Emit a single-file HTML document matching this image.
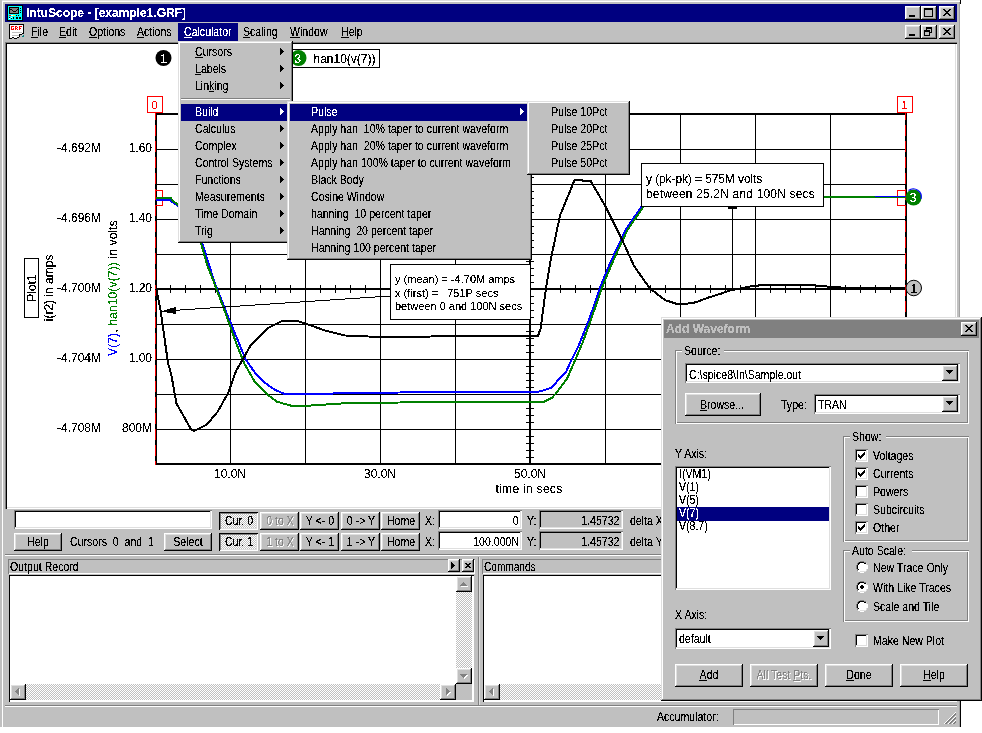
<!DOCTYPE html><html><head><meta charset="utf-8"><style>
*{margin:0;padding:0;box-sizing:border-box}
html,body{width:982px;height:733px;overflow:hidden;background:#fff}
body{position:relative;font-family:"Liberation Sans",sans-serif;font-size:12px;color:#000}
.a{position:absolute}
.t{position:absolute;white-space:pre;line-height:12px;font-size:12px;transform:scaleX(.88);transform-origin:0 0;filter:url(#th)}
.tc{transform-origin:50% 0}.tr{transform-origin:100% 0}
.n{transform:none}
.t u{text-decoration:underline;text-underline-offset:1px}
.btn{position:absolute;background:#c0c0c0;box-shadow:inset -1px -1px #000,inset 1px 1px #fff,inset -2px -2px #808080,inset 2px 2px #dfdfdf}
.sunk{position:absolute;background:#fff;box-shadow:inset 1px 1px #808080,inset -1px -1px #fff,inset -2px -2px #dfdfdf,inset 2px 2px #000}
.pop{position:absolute;background:#c0c0c0;box-shadow:inset -1px -1px #000,inset 1px 1px #dfdfdf,inset -2px -2px #808080,inset 2px 2px #fff}
.dither{background-color:#fff;background-image:linear-gradient(45deg,#c0c0c0 25%,transparent 25%,transparent 75%,#c0c0c0 75%),linear-gradient(45deg,#c0c0c0 25%,transparent 25%,transparent 75%,#c0c0c0 75%);background-size:2px 2px;background-position:0 0,1px 1px}
.dis{color:#808080;text-shadow:1px 1px #fff}
</style></head><body>
<svg width="0" height="0" style="position:absolute"><filter id="th" x="-10%" y="-10%" width="120%" height="120%" color-interpolation-filters="sRGB"><feComponentTransfer><feFuncA type="discrete" tableValues="0 0 1 1 1"/></feComponentTransfer></filter><filter id="th2" x="-10%" y="-10%" width="120%" height="120%" color-interpolation-filters="sRGB"><feComponentTransfer><feFuncA type="discrete" tableValues="0 1 1 1"/></feComponentTransfer></filter></svg>

<div class="a" style="left:0px;top:0px;width:960px;height:727px;background:#c0c0c0;box-shadow:inset 2px 0 #c0c0c0,inset 0 1px #dfdfdf,inset 3px 2px #fff,inset -1px 0 #a0a0a0"></div>
<div class="a" style="left:960px;top:0px;width:1px;height:4px;background:#000"></div>
<div class="a" style="left:5px;top:4px;width:952px;height:18px;background:#000080"></div>
<svg class="a" style="left:7px;top:5px" width="16" height="16" shape-rendering="crispEdges"><rect x="0" y="0" width="1" height="1" fill="#000"/><rect x="1" y="0" width="1" height="1" fill="#000"/><rect x="2" y="0" width="1" height="1" fill="#000"/><rect x="3" y="0" width="1" height="1" fill="#000"/><rect x="4" y="0" width="1" height="1" fill="#000"/><rect x="5" y="0" width="1" height="1" fill="#000"/><rect x="6" y="0" width="1" height="1" fill="#000"/><rect x="7" y="0" width="1" height="1" fill="#000"/><rect x="8" y="0" width="1" height="1" fill="#000"/><rect x="9" y="0" width="1" height="1" fill="#000"/><rect x="10" y="0" width="1" height="1" fill="#000"/><rect x="11" y="0" width="1" height="1" fill="#000"/><rect x="12" y="0" width="1" height="1" fill="#000"/><rect x="13" y="0" width="1" height="1" fill="#000"/><rect x="14" y="0" width="1" height="1" fill="#000"/><rect x="15" y="0" width="1" height="1" fill="#000"/><rect x="0" y="1" width="1" height="1" fill="#000"/><rect x="1" y="1" width="1" height="1" fill="#0ff"/><rect x="2" y="1" width="1" height="1" fill="#0ff"/><rect x="3" y="1" width="1" height="1" fill="#0ff"/><rect x="4" y="1" width="1" height="1" fill="#0ff"/><rect x="5" y="1" width="1" height="1" fill="#0ff"/><rect x="6" y="1" width="1" height="1" fill="#0ff"/><rect x="7" y="1" width="1" height="1" fill="#0ff"/><rect x="8" y="1" width="1" height="1" fill="#0ff"/><rect x="9" y="1" width="1" height="1" fill="#0ff"/><rect x="10" y="1" width="1" height="1" fill="#0ff"/><rect x="11" y="1" width="1" height="1" fill="#0ff"/><rect x="12" y="1" width="1" height="1" fill="#0ff"/><rect x="13" y="1" width="1" height="1" fill="#0ff"/><rect x="14" y="1" width="1" height="1" fill="#0ff"/><rect x="15" y="1" width="1" height="1" fill="#000"/><rect x="0" y="2" width="1" height="1" fill="#000"/><rect x="1" y="2" width="1" height="1" fill="#0ff"/><rect x="2" y="2" width="1" height="1" fill="#000"/><rect x="3" y="2" width="1" height="1" fill="#000"/><rect x="4" y="2" width="1" height="1" fill="#000"/><rect x="5" y="2" width="1" height="1" fill="#000"/><rect x="6" y="2" width="1" height="1" fill="#000"/><rect x="7" y="2" width="1" height="1" fill="#000"/><rect x="8" y="2" width="1" height="1" fill="#000"/><rect x="9" y="2" width="1" height="1" fill="#000"/><rect x="10" y="2" width="1" height="1" fill="#000"/><rect x="11" y="2" width="1" height="1" fill="#000"/><rect x="12" y="2" width="1" height="1" fill="#0ff"/><rect x="13" y="2" width="1" height="1" fill="#0ff"/><rect x="14" y="2" width="1" height="1" fill="#0ff"/><rect x="15" y="2" width="1" height="1" fill="#000"/><rect x="0" y="3" width="1" height="1" fill="#000"/><rect x="1" y="3" width="1" height="1" fill="#0ff"/><rect x="2" y="3" width="1" height="1" fill="#000"/><rect x="3" y="3" width="1" height="1" fill="#808080"/><rect x="4" y="3" width="1" height="1" fill="#808080"/><rect x="5" y="3" width="1" height="1" fill="#808080"/><rect x="6" y="3" width="1" height="1" fill="#808080"/><rect x="7" y="3" width="1" height="1" fill="#808080"/><rect x="8" y="3" width="1" height="1" fill="#808080"/><rect x="9" y="3" width="1" height="1" fill="#808080"/><rect x="10" y="3" width="1" height="1" fill="#808080"/><rect x="11" y="3" width="1" height="1" fill="#000"/><rect x="12" y="3" width="1" height="1" fill="#0ff"/><rect x="13" y="3" width="1" height="1" fill="#000"/><rect x="14" y="3" width="1" height="1" fill="#0ff"/><rect x="15" y="3" width="1" height="1" fill="#000"/><rect x="0" y="4" width="1" height="1" fill="#000"/><rect x="1" y="4" width="1" height="1" fill="#0ff"/><rect x="2" y="4" width="1" height="1" fill="#000"/><rect x="3" y="4" width="1" height="1" fill="#000"/><rect x="4" y="4" width="1" height="1" fill="#000"/><rect x="5" y="4" width="1" height="1" fill="#808080"/><rect x="6" y="4" width="1" height="1" fill="#808080"/><rect x="7" y="4" width="1" height="1" fill="#808080"/><rect x="8" y="4" width="1" height="1" fill="#808080"/><rect x="9" y="4" width="1" height="1" fill="#808080"/><rect x="10" y="4" width="1" height="1" fill="#000"/><rect x="11" y="4" width="1" height="1" fill="#000"/><rect x="12" y="4" width="1" height="1" fill="#0ff"/><rect x="13" y="4" width="1" height="1" fill="#0ff"/><rect x="14" y="4" width="1" height="1" fill="#0ff"/><rect x="15" y="4" width="1" height="1" fill="#000"/><rect x="0" y="5" width="1" height="1" fill="#000"/><rect x="1" y="5" width="1" height="1" fill="#0ff"/><rect x="2" y="5" width="1" height="1" fill="#000"/><rect x="3" y="5" width="1" height="1" fill="#808080"/><rect x="4" y="5" width="1" height="1" fill="#808080"/><rect x="5" y="5" width="1" height="1" fill="#000"/><rect x="6" y="5" width="1" height="1" fill="#808080"/><rect x="7" y="5" width="1" height="1" fill="#808080"/><rect x="8" y="5" width="1" height="1" fill="#808080"/><rect x="9" y="5" width="1" height="1" fill="#000"/><rect x="10" y="5" width="1" height="1" fill="#808080"/><rect x="11" y="5" width="1" height="1" fill="#000"/><rect x="12" y="5" width="1" height="1" fill="#0ff"/><rect x="13" y="5" width="1" height="1" fill="#000"/><rect x="14" y="5" width="1" height="1" fill="#0ff"/><rect x="15" y="5" width="1" height="1" fill="#000"/><rect x="0" y="6" width="1" height="1" fill="#000"/><rect x="1" y="6" width="1" height="1" fill="#0ff"/><rect x="2" y="6" width="1" height="1" fill="#000"/><rect x="3" y="6" width="1" height="1" fill="#808080"/><rect x="4" y="6" width="1" height="1" fill="#808080"/><rect x="5" y="6" width="1" height="1" fill="#808080"/><rect x="6" y="6" width="1" height="1" fill="#000"/><rect x="7" y="6" width="1" height="1" fill="#000"/><rect x="8" y="6" width="1" height="1" fill="#000"/><rect x="9" y="6" width="1" height="1" fill="#808080"/><rect x="10" y="6" width="1" height="1" fill="#808080"/><rect x="11" y="6" width="1" height="1" fill="#000"/><rect x="12" y="6" width="1" height="1" fill="#0ff"/><rect x="13" y="6" width="1" height="1" fill="#0ff"/><rect x="14" y="6" width="1" height="1" fill="#0ff"/><rect x="15" y="6" width="1" height="1" fill="#000"/><rect x="0" y="7" width="1" height="1" fill="#000"/><rect x="1" y="7" width="1" height="1" fill="#0ff"/><rect x="2" y="7" width="1" height="1" fill="#000"/><rect x="3" y="7" width="1" height="1" fill="#808080"/><rect x="4" y="7" width="1" height="1" fill="#808080"/><rect x="5" y="7" width="1" height="1" fill="#808080"/><rect x="6" y="7" width="1" height="1" fill="#808080"/><rect x="7" y="7" width="1" height="1" fill="#808080"/><rect x="8" y="7" width="1" height="1" fill="#808080"/><rect x="9" y="7" width="1" height="1" fill="#808080"/><rect x="10" y="7" width="1" height="1" fill="#808080"/><rect x="11" y="7" width="1" height="1" fill="#000"/><rect x="12" y="7" width="1" height="1" fill="#0ff"/><rect x="13" y="7" width="1" height="1" fill="#000"/><rect x="14" y="7" width="1" height="1" fill="#0ff"/><rect x="15" y="7" width="1" height="1" fill="#000"/><rect x="0" y="8" width="1" height="1" fill="#000"/><rect x="1" y="8" width="1" height="1" fill="#0ff"/><rect x="2" y="8" width="1" height="1" fill="#000"/><rect x="3" y="8" width="1" height="1" fill="#000"/><rect x="4" y="8" width="1" height="1" fill="#000"/><rect x="5" y="8" width="1" height="1" fill="#000"/><rect x="6" y="8" width="1" height="1" fill="#000"/><rect x="7" y="8" width="1" height="1" fill="#000"/><rect x="8" y="8" width="1" height="1" fill="#000"/><rect x="9" y="8" width="1" height="1" fill="#000"/><rect x="10" y="8" width="1" height="1" fill="#000"/><rect x="11" y="8" width="1" height="1" fill="#000"/><rect x="12" y="8" width="1" height="1" fill="#0ff"/><rect x="13" y="8" width="1" height="1" fill="#0ff"/><rect x="14" y="8" width="1" height="1" fill="#0ff"/><rect x="15" y="8" width="1" height="1" fill="#000"/><rect x="0" y="9" width="1" height="1" fill="#000"/><rect x="1" y="9" width="1" height="1" fill="#0ff"/><rect x="2" y="9" width="1" height="1" fill="#0ff"/><rect x="3" y="9" width="1" height="1" fill="#0ff"/><rect x="4" y="9" width="1" height="1" fill="#0ff"/><rect x="5" y="9" width="1" height="1" fill="#0ff"/><rect x="6" y="9" width="1" height="1" fill="#0ff"/><rect x="7" y="9" width="1" height="1" fill="#0ff"/><rect x="8" y="9" width="1" height="1" fill="#0ff"/><rect x="9" y="9" width="1" height="1" fill="#0ff"/><rect x="10" y="9" width="1" height="1" fill="#0ff"/><rect x="11" y="9" width="1" height="1" fill="#0ff"/><rect x="12" y="9" width="1" height="1" fill="#0ff"/><rect x="13" y="9" width="1" height="1" fill="#0ff"/><rect x="14" y="9" width="1" height="1" fill="#0ff"/><rect x="15" y="9" width="1" height="1" fill="#000"/><rect x="0" y="10" width="1" height="1" fill="#000"/><rect x="1" y="10" width="1" height="1" fill="#0ff"/><rect x="2" y="10" width="1" height="1" fill="#f00"/><rect x="3" y="10" width="1" height="1" fill="#f00"/><rect x="4" y="10" width="1" height="1" fill="#fff"/><rect x="5" y="10" width="1" height="1" fill="#fff"/><rect x="6" y="10" width="1" height="1" fill="#ff0"/><rect x="7" y="10" width="1" height="1" fill="#ff0"/><rect x="8" y="10" width="1" height="1" fill="#0ff"/><rect x="9" y="10" width="1" height="1" fill="#000"/><rect x="10" y="10" width="1" height="1" fill="#0ff"/><rect x="11" y="10" width="1" height="1" fill="#000"/><rect x="12" y="10" width="1" height="1" fill="#0ff"/><rect x="13" y="10" width="1" height="1" fill="#0ff"/><rect x="14" y="10" width="1" height="1" fill="#0ff"/><rect x="15" y="10" width="1" height="1" fill="#000"/><rect x="0" y="11" width="1" height="1" fill="#000"/><rect x="1" y="11" width="1" height="1" fill="#0ff"/><rect x="2" y="11" width="1" height="1" fill="#0ff"/><rect x="3" y="11" width="1" height="1" fill="#0ff"/><rect x="4" y="11" width="1" height="1" fill="#0ff"/><rect x="5" y="11" width="1" height="1" fill="#0ff"/><rect x="6" y="11" width="1" height="1" fill="#0ff"/><rect x="7" y="11" width="1" height="1" fill="#0ff"/><rect x="8" y="11" width="1" height="1" fill="#0ff"/><rect x="9" y="11" width="1" height="1" fill="#0ff"/><rect x="10" y="11" width="1" height="1" fill="#0ff"/><rect x="11" y="11" width="1" height="1" fill="#0ff"/><rect x="12" y="11" width="1" height="1" fill="#0ff"/><rect x="13" y="11" width="1" height="1" fill="#0ff"/><rect x="14" y="11" width="1" height="1" fill="#0ff"/><rect x="15" y="11" width="1" height="1" fill="#000"/><rect x="0" y="12" width="1" height="1" fill="#000"/><rect x="1" y="12" width="1" height="1" fill="#0ff"/><rect x="2" y="12" width="1" height="1" fill="#000"/><rect x="3" y="12" width="1" height="1" fill="#0ff"/><rect x="4" y="12" width="1" height="1" fill="#fff"/><rect x="5" y="12" width="1" height="1" fill="#0ff"/><rect x="6" y="12" width="1" height="1" fill="#000"/><rect x="7" y="12" width="1" height="1" fill="#0ff"/><rect x="8" y="12" width="1" height="1" fill="#0ff"/><rect x="9" y="12" width="1" height="1" fill="#000"/><rect x="10" y="12" width="1" height="1" fill="#000"/><rect x="11" y="12" width="1" height="1" fill="#0ff"/><rect x="12" y="12" width="1" height="1" fill="#000"/><rect x="13" y="12" width="1" height="1" fill="#000"/><rect x="14" y="12" width="1" height="1" fill="#0ff"/><rect x="15" y="12" width="1" height="1" fill="#000"/><rect x="0" y="13" width="1" height="1" fill="#000"/><rect x="1" y="13" width="1" height="1" fill="#0ff"/><rect x="2" y="13" width="1" height="1" fill="#fff"/><rect x="3" y="13" width="1" height="1" fill="#0ff"/><rect x="4" y="13" width="1" height="1" fill="#000"/><rect x="5" y="13" width="1" height="1" fill="#0ff"/><rect x="6" y="13" width="1" height="1" fill="#000"/><rect x="7" y="13" width="1" height="1" fill="#0ff"/><rect x="8" y="13" width="1" height="1" fill="#0ff"/><rect x="9" y="13" width="1" height="1" fill="#000"/><rect x="10" y="13" width="1" height="1" fill="#000"/><rect x="11" y="13" width="1" height="1" fill="#0ff"/><rect x="12" y="13" width="1" height="1" fill="#000"/><rect x="13" y="13" width="1" height="1" fill="#000"/><rect x="14" y="13" width="1" height="1" fill="#0ff"/><rect x="15" y="13" width="1" height="1" fill="#000"/><rect x="0" y="14" width="1" height="1" fill="#000"/><rect x="1" y="14" width="1" height="1" fill="#0ff"/><rect x="2" y="14" width="1" height="1" fill="#0ff"/><rect x="3" y="14" width="1" height="1" fill="#0ff"/><rect x="4" y="14" width="1" height="1" fill="#0ff"/><rect x="5" y="14" width="1" height="1" fill="#0ff"/><rect x="6" y="14" width="1" height="1" fill="#0ff"/><rect x="7" y="14" width="1" height="1" fill="#0ff"/><rect x="8" y="14" width="1" height="1" fill="#0ff"/><rect x="9" y="14" width="1" height="1" fill="#0ff"/><rect x="10" y="14" width="1" height="1" fill="#0ff"/><rect x="11" y="14" width="1" height="1" fill="#0ff"/><rect x="12" y="14" width="1" height="1" fill="#0ff"/><rect x="13" y="14" width="1" height="1" fill="#0ff"/><rect x="14" y="14" width="1" height="1" fill="#0ff"/><rect x="15" y="14" width="1" height="1" fill="#000"/><rect x="0" y="15" width="1" height="1" fill="#000"/><rect x="1" y="15" width="1" height="1" fill="#000"/><rect x="2" y="15" width="1" height="1" fill="#000"/><rect x="3" y="15" width="1" height="1" fill="#000"/><rect x="4" y="15" width="1" height="1" fill="#000"/><rect x="5" y="15" width="1" height="1" fill="#000"/><rect x="6" y="15" width="1" height="1" fill="#000"/><rect x="7" y="15" width="1" height="1" fill="#000"/><rect x="8" y="15" width="1" height="1" fill="#000"/><rect x="9" y="15" width="1" height="1" fill="#000"/><rect x="10" y="15" width="1" height="1" fill="#000"/><rect x="11" y="15" width="1" height="1" fill="#000"/><rect x="12" y="15" width="1" height="1" fill="#000"/><rect x="13" y="15" width="1" height="1" fill="#000"/><rect x="14" y="15" width="1" height="1" fill="#000"/><rect x="15" y="15" width="1" height="1" fill="#000"/></svg>
<div class="t" style="left:26px;top:7px;color:#fff;font-weight:bold;transform:none">IntuScope - [example1.GRF]</div>
<div class="btn" style="left:905px;top:6px;width:16px;height:14px;"></div>
<div class="btn" style="left:921px;top:6px;width:16px;height:14px;"></div>
<div class="btn" style="left:939px;top:6px;width:16px;height:14px;"></div>
<div class="a" style="left:909px;top:15px;width:6px;height:2px;background:#000"></div>
<div class="a" style="left:924px;top:8px;width:9px;height:9px;border:1px solid #000;border-top-width:2px"></div>
<svg class="a" style="left:943px;top:9px" width="8" height="7" shape-rendering="crispEdges"><path d="M0 0h2v1h1v1h2v-1h1v-1h2v1h-1v1h-1v1h-1v1h1v1h1v1h1v1h-2v-1h-1v-1h-2v1h-1v1h-2v-1h1v-1h1v-1h1v-1h-1v-1h-1v-1h-1z" fill="#000"/></svg>
<svg class="a" style="left:9px;top:24px" width="16" height="16" shape-rendering="crispEdges"><rect x="0" y="0" width="1" height="1" fill="#000"/><rect x="1" y="0" width="1" height="1" fill="#000"/><rect x="2" y="0" width="1" height="1" fill="#000"/><rect x="3" y="0" width="1" height="1" fill="#000"/><rect x="4" y="0" width="1" height="1" fill="#000"/><rect x="5" y="0" width="1" height="1" fill="#000"/><rect x="6" y="0" width="1" height="1" fill="#000"/><rect x="7" y="0" width="1" height="1" fill="#000"/><rect x="8" y="0" width="1" height="1" fill="#000"/><rect x="9" y="0" width="1" height="1" fill="#000"/><rect x="10" y="0" width="1" height="1" fill="#000"/><rect x="11" y="0" width="1" height="1" fill="#000"/><rect x="12" y="0" width="1" height="1" fill="#000"/><rect x="13" y="0" width="1" height="1" fill="#000"/><rect x="14" y="0" width="1" height="1" fill="#000"/><rect x="0" y="1" width="1" height="1" fill="#000"/><rect x="0" y="2" width="1" height="1" fill="#000"/><rect x="0" y="3" width="1" height="1" fill="#000"/><rect x="0" y="4" width="1" height="1" fill="#000"/><rect x="0" y="5" width="1" height="1" fill="#000"/><rect x="0" y="6" width="1" height="1" fill="#000"/><rect x="0" y="7" width="1" height="1" fill="#000"/><rect x="0" y="8" width="1" height="1" fill="#000"/><rect x="0" y="9" width="1" height="1" fill="#000"/><rect x="0" y="10" width="1" height="1" fill="#000"/><rect x="0" y="11" width="1" height="1" fill="#000"/><rect x="0" y="12" width="1" height="1" fill="#000"/><rect x="0" y="13" width="1" height="1" fill="#000"/><rect x="0" y="14" width="1" height="1" fill="#000"/><rect x="14" y="1" width="1" height="1" fill="#000"/><rect x="14" y="2" width="1" height="1" fill="#000"/><rect x="14" y="3" width="1" height="1" fill="#000"/><rect x="14" y="4" width="1" height="1" fill="#000"/><rect x="14" y="5" width="1" height="1" fill="#000"/><rect x="14" y="6" width="1" height="1" fill="#000"/><rect x="14" y="7" width="1" height="1" fill="#000"/><rect x="14" y="8" width="1" height="1" fill="#000"/><rect x="14" y="9" width="1" height="1" fill="#000"/><rect x="1" y="1" width="1" height="1" fill="#fff"/><rect x="2" y="1" width="1" height="1" fill="#fff"/><rect x="3" y="1" width="1" height="1" fill="#fff"/><rect x="4" y="1" width="1" height="1" fill="#fff"/><rect x="5" y="1" width="1" height="1" fill="#fff"/><rect x="6" y="1" width="1" height="1" fill="#fff"/><rect x="7" y="1" width="1" height="1" fill="#fff"/><rect x="8" y="1" width="1" height="1" fill="#fff"/><rect x="9" y="1" width="1" height="1" fill="#fff"/><rect x="10" y="1" width="1" height="1" fill="#fff"/><rect x="11" y="1" width="1" height="1" fill="#fff"/><rect x="12" y="1" width="1" height="1" fill="#fff"/><rect x="13" y="1" width="1" height="1" fill="#fff"/><rect x="1" y="2" width="1" height="1" fill="#fff"/><rect x="2" y="2" width="1" height="1" fill="#f00"/><rect x="3" y="2" width="1" height="1" fill="#f00"/><rect x="4" y="2" width="1" height="1" fill="#f00"/><rect x="5" y="2" width="1" height="1" fill="#fff"/><rect x="6" y="2" width="1" height="1" fill="#f00"/><rect x="7" y="2" width="1" height="1" fill="#f00"/><rect x="8" y="2" width="1" height="1" fill="#fff"/><rect x="9" y="2" width="1" height="1" fill="#fff"/><rect x="10" y="2" width="1" height="1" fill="#f00"/><rect x="11" y="2" width="1" height="1" fill="#f00"/><rect x="12" y="2" width="1" height="1" fill="#f00"/><rect x="13" y="2" width="1" height="1" fill="#fff"/><rect x="1" y="3" width="1" height="1" fill="#fff"/><rect x="2" y="3" width="1" height="1" fill="#f00"/><rect x="3" y="3" width="1" height="1" fill="#fff"/><rect x="4" y="3" width="1" height="1" fill="#fff"/><rect x="5" y="3" width="1" height="1" fill="#fff"/><rect x="6" y="3" width="1" height="1" fill="#f00"/><rect x="7" y="3" width="1" height="1" fill="#fff"/><rect x="8" y="3" width="1" height="1" fill="#f00"/><rect x="9" y="3" width="1" height="1" fill="#fff"/><rect x="10" y="3" width="1" height="1" fill="#f00"/><rect x="11" y="3" width="1" height="1" fill="#fff"/><rect x="12" y="3" width="1" height="1" fill="#fff"/><rect x="13" y="3" width="1" height="1" fill="#fff"/><rect x="1" y="4" width="1" height="1" fill="#fff"/><rect x="2" y="4" width="1" height="1" fill="#f00"/><rect x="3" y="4" width="1" height="1" fill="#fff"/><rect x="4" y="4" width="1" height="1" fill="#f00"/><rect x="5" y="4" width="1" height="1" fill="#fff"/><rect x="6" y="4" width="1" height="1" fill="#f00"/><rect x="7" y="4" width="1" height="1" fill="#f00"/><rect x="8" y="4" width="1" height="1" fill="#fff"/><rect x="9" y="4" width="1" height="1" fill="#fff"/><rect x="10" y="4" width="1" height="1" fill="#f00"/><rect x="11" y="4" width="1" height="1" fill="#f00"/><rect x="12" y="4" width="1" height="1" fill="#fff"/><rect x="13" y="4" width="1" height="1" fill="#fff"/><rect x="1" y="5" width="1" height="1" fill="#fff"/><rect x="2" y="5" width="1" height="1" fill="#f00"/><rect x="3" y="5" width="1" height="1" fill="#f00"/><rect x="4" y="5" width="1" height="1" fill="#f00"/><rect x="5" y="5" width="1" height="1" fill="#fff"/><rect x="6" y="5" width="1" height="1" fill="#f00"/><rect x="7" y="5" width="1" height="1" fill="#fff"/><rect x="8" y="5" width="1" height="1" fill="#f00"/><rect x="9" y="5" width="1" height="1" fill="#fff"/><rect x="10" y="5" width="1" height="1" fill="#f00"/><rect x="11" y="5" width="1" height="1" fill="#fff"/><rect x="12" y="5" width="1" height="1" fill="#fff"/><rect x="13" y="5" width="1" height="1" fill="#fff"/><rect x="1" y="6" width="1" height="1" fill="#fff"/><rect x="2" y="6" width="1" height="1" fill="#fff"/><rect x="3" y="6" width="1" height="1" fill="#fff"/><rect x="4" y="6" width="1" height="1" fill="#fff"/><rect x="5" y="6" width="1" height="1" fill="#fff"/><rect x="6" y="6" width="1" height="1" fill="#fff"/><rect x="7" y="6" width="1" height="1" fill="#fff"/><rect x="8" y="6" width="1" height="1" fill="#fff"/><rect x="9" y="6" width="1" height="1" fill="#fff"/><rect x="10" y="6" width="1" height="1" fill="#fff"/><rect x="11" y="6" width="1" height="1" fill="#fff"/><rect x="12" y="6" width="1" height="1" fill="#fff"/><rect x="13" y="6" width="1" height="1" fill="#fff"/><rect x="1" y="7" width="1" height="1" fill="#fff"/><rect x="2" y="7" width="1" height="1" fill="#fff"/><rect x="3" y="7" width="1" height="1" fill="#fff"/><rect x="4" y="7" width="1" height="1" fill="#fff"/><rect x="5" y="7" width="1" height="1" fill="#fff"/><rect x="6" y="7" width="1" height="1" fill="#fff"/><rect x="7" y="7" width="1" height="1" fill="#fff"/><rect x="8" y="7" width="1" height="1" fill="#fff"/><rect x="9" y="7" width="1" height="1" fill="#fff"/><rect x="10" y="7" width="1" height="1" fill="#fff"/><rect x="11" y="7" width="1" height="1" fill="#fff"/><rect x="12" y="7" width="1" height="1" fill="#fff"/><rect x="13" y="7" width="1" height="1" fill="#fff"/><rect x="1" y="8" width="1" height="1" fill="#fff"/><rect x="2" y="8" width="1" height="1" fill="#fff"/><rect x="3" y="8" width="1" height="1" fill="#c0c0c0"/><rect x="4" y="8" width="1" height="1" fill="#c0c0c0"/><rect x="5" y="8" width="1" height="1" fill="#c0c0c0"/><rect x="6" y="8" width="1" height="1" fill="#c0c0c0"/><rect x="7" y="8" width="1" height="1" fill="#c0c0c0"/><rect x="8" y="8" width="1" height="1" fill="#c0c0c0"/><rect x="9" y="8" width="1" height="1" fill="#c0c0c0"/><rect x="10" y="8" width="1" height="1" fill="#c0c0c0"/><rect x="11" y="8" width="1" height="1" fill="#c0c0c0"/><rect x="12" y="8" width="1" height="1" fill="#c0c0c0"/><rect x="13" y="8" width="1" height="1" fill="#fff"/><rect x="1" y="9" width="1" height="1" fill="#fff"/><rect x="2" y="9" width="1" height="1" fill="#fff"/><rect x="3" y="9" width="1" height="1" fill="#fff"/><rect x="4" y="9" width="1" height="1" fill="#fff"/><rect x="5" y="9" width="1" height="1" fill="#fff"/><rect x="6" y="9" width="1" height="1" fill="#fff"/><rect x="7" y="9" width="1" height="1" fill="#fff"/><rect x="8" y="9" width="1" height="1" fill="#fff"/><rect x="9" y="9" width="1" height="1" fill="#fff"/><rect x="10" y="9" width="1" height="1" fill="#fff"/><rect x="11" y="9" width="1" height="1" fill="#fff"/><rect x="12" y="9" width="1" height="1" fill="#fff"/><rect x="13" y="9" width="1" height="1" fill="#000"/><rect x="1" y="10" width="1" height="1" fill="#fff"/><rect x="2" y="10" width="1" height="1" fill="#fff"/><rect x="3" y="10" width="1" height="1" fill="#fff"/><rect x="4" y="10" width="1" height="1" fill="#fff"/><rect x="5" y="10" width="1" height="1" fill="#fff"/><rect x="6" y="10" width="1" height="1" fill="#fff"/><rect x="7" y="10" width="1" height="1" fill="#fff"/><rect x="8" y="10" width="1" height="1" fill="#fff"/><rect x="9" y="10" width="1" height="1" fill="#fff"/><rect x="1" y="11" width="1" height="1" fill="#fff"/><rect x="2" y="11" width="1" height="1" fill="#fff"/><rect x="3" y="11" width="1" height="1" fill="#c0c0c0"/><rect x="4" y="11" width="1" height="1" fill="#c0c0c0"/><rect x="5" y="11" width="1" height="1" fill="#c0c0c0"/><rect x="6" y="11" width="1" height="1" fill="#c0c0c0"/><rect x="7" y="11" width="1" height="1" fill="#c0c0c0"/><rect x="8" y="11" width="1" height="1" fill="#c0c0c0"/><rect x="9" y="11" width="1" height="1" fill="#c0c0c0"/><rect x="1" y="12" width="1" height="1" fill="#fff"/><rect x="2" y="12" width="1" height="1" fill="#fff"/><rect x="3" y="12" width="1" height="1" fill="#fff"/><rect x="4" y="12" width="1" height="1" fill="#fff"/><rect x="5" y="12" width="1" height="1" fill="#fff"/><rect x="6" y="12" width="1" height="1" fill="#fff"/><rect x="7" y="12" width="1" height="1" fill="#fff"/><rect x="8" y="12" width="1" height="1" fill="#fff"/><rect x="9" y="12" width="1" height="1" fill="#fff"/><rect x="10" y="10" width="1" height="1" fill="#000"/><rect x="11" y="10" width="1" height="1" fill="#000"/><rect x="12" y="10" width="1" height="1" fill="#000"/><rect x="10" y="11" width="1" height="1" fill="#000"/><rect x="10" y="12" width="1" height="1" fill="#000"/><rect x="1" y="13" width="1" height="1" fill="#fff"/><rect x="2" y="13" width="1" height="1" fill="#fff"/><rect x="5" y="13" width="1" height="1" fill="#fff"/><rect x="6" y="13" width="1" height="1" fill="#fff"/><rect x="7" y="13" width="1" height="1" fill="#fff"/><rect x="3" y="13" width="1" height="1" fill="#000"/><rect x="4" y="13" width="1" height="1" fill="#000"/><rect x="8" y="13" width="1" height="1" fill="#000"/><rect x="9" y="13" width="1" height="1" fill="#000"/><rect x="1" y="14" width="1" height="1" fill="#000"/><rect x="2" y="14" width="1" height="1" fill="#000"/><rect x="5" y="14" width="1" height="1" fill="#000"/><rect x="6" y="14" width="1" height="1" fill="#000"/><rect x="7" y="14" width="1" height="1" fill="#000"/><rect x="14" y="11" width="1" height="1" fill="#008080"/><rect x="13" y="12" width="1" height="1" fill="#008080"/><rect x="14" y="12" width="1" height="1" fill="#008080"/></svg>
<div class="t" style="left:31px;top:26px;"><u>F</u>ile</div>
<div class="t" style="left:59px;top:26px;"><u>E</u>dit</div>
<div class="t" style="left:89px;top:26px;"><u>O</u>ptions</div>
<div class="t" style="left:137px;top:26px;"><u>A</u>ctions</div>
<div class="t" style="left:243px;top:26px;"><u>S</u>caling</div>
<div class="t" style="left:290px;top:26px;"><u>W</u>indow</div>
<div class="t" style="left:341px;top:26px;"><u>H</u>elp</div>
<div class="a" style="left:178px;top:23px;width:60px;height:19px;background:#000080"></div>
<div class="t" style="left:184px;top:26px;color:#fff"><u>C</u>alculator</div>
<div class="btn" style="left:905px;top:25px;width:16px;height:14px;"></div>
<div class="a" style="left:909px;top:34px;width:6px;height:2px;background:#000"></div>
<div class="btn" style="left:921px;top:25px;width:16px;height:14px;"></div>
<div class="a" style="left:926px;top:27px;width:6px;height:6px;border:1px solid #000;border-top-width:2px"></div>
<div class="a" style="left:924px;top:30px;width:6px;height:6px;border:1px solid #000;border-top-width:2px;background:#c0c0c0"></div>
<div class="btn" style="left:939px;top:25px;width:16px;height:14px;"></div>
<svg class="a" style="left:943px;top:28px" width="8" height="7" shape-rendering="crispEdges"><path d="M0 0h2v1h1v1h2v-1h1v-1h2v1h-1v1h-1v1h-1v1h1v1h1v1h1v1h-2v-1h-1v-1h-2v1h-1v1h-2v-1h1v-1h1v-1h1v-1h-1v-1h-1v-1h-1z" fill="#000"/></svg>
<div class="a" style="left:5px;top:42px;width:952px;height:467px;background:#fff;box-shadow:inset 1px 1px #808080,inset 2px 2px #000,inset -1px -1px #fff,inset -2px -2px #dfdfdf"></div>
<svg class="a" style="left:7px;top:44px" width="948" height="464" viewBox="7 44 948 464">
<defs><clipPath id="pc"><rect x="155" y="113" width="752" height="352"/></clipPath></defs>
<g shape-rendering="crispEdges" fill="#000">
<rect x="230" y="113" width="1" height="352"/>
<rect x="305" y="113" width="1" height="352"/>
<rect x="380" y="113" width="1" height="352"/>
<rect x="455" y="113" width="1" height="352"/>
<rect x="529" y="113" width="2" height="352"/>
<rect x="605" y="113" width="1" height="352"/>
<rect x="680" y="113" width="1" height="352"/>
<rect x="755" y="113" width="1" height="352"/>
<rect x="830" y="113" width="1" height="352"/>
<rect x="155" y="149" width="752" height="1"/>
<rect x="155" y="184" width="752" height="1"/>
<rect x="155" y="219" width="752" height="1"/>
<rect x="155" y="254" width="752" height="1"/>
<rect x="155" y="288" width="752" height="2"/>
<rect x="155" y="324" width="752" height="1"/>
<rect x="155" y="359" width="752" height="1"/>
<rect x="155" y="394" width="752" height="1"/>
<rect x="155" y="429" width="752" height="1"/>
<rect x="155" y="113" width="751" height="2"/>
<rect x="155" y="463" width="751" height="2"/>
<rect x="155" y="113" width="2" height="352"/>
<rect x="905" y="113" width="2" height="400"/>
<rect x="170" y="285" width="1" height="8"/>
<rect x="185" y="285" width="1" height="8"/>
<rect x="200" y="285" width="1" height="8"/>
<rect x="215" y="285" width="1" height="8"/>
<rect x="230" y="285" width="1" height="8"/>
<rect x="245" y="285" width="1" height="8"/>
<rect x="260" y="285" width="1" height="8"/>
<rect x="275" y="285" width="1" height="8"/>
<rect x="290" y="285" width="1" height="8"/>
<rect x="305" y="285" width="1" height="8"/>
<rect x="320" y="285" width="1" height="8"/>
<rect x="335" y="285" width="1" height="8"/>
<rect x="350" y="285" width="1" height="8"/>
<rect x="365" y="285" width="1" height="8"/>
<rect x="380" y="285" width="1" height="8"/>
<rect x="395" y="285" width="1" height="8"/>
<rect x="410" y="285" width="1" height="8"/>
<rect x="425" y="285" width="1" height="8"/>
<rect x="440" y="285" width="1" height="8"/>
<rect x="455" y="285" width="1" height="8"/>
<rect x="470" y="285" width="1" height="8"/>
<rect x="485" y="285" width="1" height="8"/>
<rect x="500" y="285" width="1" height="8"/>
<rect x="515" y="285" width="1" height="8"/>
<rect x="530" y="285" width="1" height="8"/>
<rect x="545" y="285" width="1" height="8"/>
<rect x="560" y="285" width="1" height="8"/>
<rect x="575" y="285" width="1" height="8"/>
<rect x="590" y="285" width="1" height="8"/>
<rect x="605" y="285" width="1" height="8"/>
<rect x="620" y="285" width="1" height="8"/>
<rect x="635" y="285" width="1" height="8"/>
<rect x="650" y="285" width="1" height="8"/>
<rect x="665" y="285" width="1" height="8"/>
<rect x="680" y="285" width="1" height="8"/>
<rect x="695" y="285" width="1" height="8"/>
<rect x="710" y="285" width="1" height="8"/>
<rect x="725" y="285" width="1" height="8"/>
<rect x="740" y="285" width="1" height="8"/>
<rect x="755" y="285" width="1" height="8"/>
<rect x="770" y="285" width="1" height="8"/>
<rect x="785" y="285" width="1" height="8"/>
<rect x="800" y="285" width="1" height="8"/>
<rect x="815" y="285" width="1" height="8"/>
<rect x="830" y="285" width="1" height="8"/>
<rect x="845" y="285" width="1" height="8"/>
<rect x="860" y="285" width="1" height="8"/>
<rect x="875" y="285" width="1" height="8"/>
<rect x="890" y="285" width="1" height="8"/>
<rect x="526" y="121" width="8" height="1"/>
<rect x="526" y="128" width="8" height="1"/>
<rect x="526" y="135" width="8" height="1"/>
<rect x="526" y="142" width="8" height="1"/>
<rect x="526" y="149" width="8" height="1"/>
<rect x="526" y="156" width="8" height="1"/>
<rect x="526" y="163" width="8" height="1"/>
<rect x="526" y="170" width="8" height="1"/>
<rect x="526" y="177" width="8" height="1"/>
<rect x="526" y="184" width="8" height="1"/>
<rect x="526" y="191" width="8" height="1"/>
<rect x="526" y="198" width="8" height="1"/>
<rect x="526" y="205" width="8" height="1"/>
<rect x="526" y="212" width="8" height="1"/>
<rect x="526" y="219" width="8" height="1"/>
<rect x="526" y="226" width="8" height="1"/>
<rect x="526" y="233" width="8" height="1"/>
<rect x="526" y="240" width="8" height="1"/>
<rect x="526" y="247" width="8" height="1"/>
<rect x="526" y="254" width="8" height="1"/>
<rect x="526" y="261" width="8" height="1"/>
<rect x="526" y="268" width="8" height="1"/>
<rect x="526" y="275" width="8" height="1"/>
<rect x="526" y="282" width="8" height="1"/>
<rect x="526" y="289" width="8" height="1"/>
<rect x="526" y="296" width="8" height="1"/>
<rect x="526" y="303" width="8" height="1"/>
<rect x="526" y="310" width="8" height="1"/>
<rect x="526" y="317" width="8" height="1"/>
<rect x="526" y="324" width="8" height="1"/>
<rect x="526" y="331" width="8" height="1"/>
<rect x="526" y="338" width="8" height="1"/>
<rect x="526" y="345" width="8" height="1"/>
<rect x="526" y="352" width="8" height="1"/>
<rect x="526" y="359" width="8" height="1"/>
<rect x="526" y="366" width="8" height="1"/>
<rect x="526" y="373" width="8" height="1"/>
<rect x="526" y="380" width="8" height="1"/>
<rect x="526" y="387" width="8" height="1"/>
<rect x="526" y="394" width="8" height="1"/>
<rect x="526" y="401" width="8" height="1"/>
<rect x="526" y="408" width="8" height="1"/>
<rect x="526" y="415" width="8" height="1"/>
<rect x="526" y="422" width="8" height="1"/>
<rect x="526" y="429" width="8" height="1"/>
<rect x="526" y="436" width="8" height="1"/>
<rect x="526" y="443" width="8" height="1"/>
<rect x="526" y="450" width="8" height="1"/>
<rect x="526" y="457" width="8" height="1"/>
</g>
<line x1="155.5" y1="113" x2="155.5" y2="465" stroke="#f00" stroke-width="1" stroke-dasharray="11 5" stroke-dashoffset="4" shape-rendering="crispEdges"/>
<line x1="905.5" y1="113" x2="905.5" y2="508" stroke="#f00" stroke-width="1" stroke-dasharray="11 5" stroke-dashoffset="4" shape-rendering="crispEdges"/>
<g fill="none" stroke="#f00" stroke-width="1" shape-rendering="crispEdges">
<rect x="147.5" y="96.5" width="15" height="16"/>
<rect x="897.5" y="96.5" width="15" height="16"/>
<path d="M905 190.5H897.5V205.5H905"/>
</g>
<g clip-path="url(#pc)"><rect x="147.5" y="190.5" width="15" height="15" fill="none" stroke="#f00" shape-rendering="crispEdges"/></g>
<text x="154.5" y="109" font-size="11" fill="#f00" text-anchor="middle" font-family="Liberation Sans" filter="url(#th)">0</text>
<text x="904.5" y="109" font-size="11" fill="#f00" text-anchor="middle" font-family="Liberation Sans" filter="url(#th)">1</text>
<g clip-path="url(#pc)">
<polyline points="156,199.7 169.6,200 172.9,202.4 178,206 202,242 209,265 215.5,285 229.4,320 236.2,336.4 245.7,359.5 255.3,373.2 264.8,382.7 274.4,389.5 285.3,394.3 326.2,394.3 337.1,393 400,392.5 537.4,391.9 544.7,390 552.1,387.3 557,381.4 565.6,372.8 571.8,359.3 579.1,344.6 589,320 599.6,289 603.9,278 611.5,260 616.3,250 626,229 642,206 660,198 700,197 905,197" fill="none" stroke="#00f" stroke-width="2" shape-rendering="crispEdges" stroke-linejoin="round"/>
<polyline points="156,198 170.7,198 173.4,201.4 178,204.6 200.7,242 207.2,265 215,285 228,320 236.2,343.2 244.4,363.6 255.3,382.7 266.2,393.6 277.1,401.8 290.7,405.6 309.8,405.6 326.2,404.5 348,403 400,402.5 543.5,402 552.1,397.6 555.8,393.7 566.9,379 575.5,359.3 582.8,342.1 590.8,320 601.6,289 605.9,278 613.5,260 618,250 628,229 644,206 660,198 700,197 905,197" fill="none" stroke="#008000" stroke-width="2" shape-rendering="crispEdges" stroke-linejoin="round"/>
<polyline points="156.3,289.2 160.6,310.4 168,363.2 171.1,373.7 176.4,403.3 191.2,429.7 194.4,430.8 207,424.4 217.6,411.8 228.2,392.8 236.2,370.5 240,364.2 251.2,344.5 267.5,328.2 282.5,320.7 296.2,320.7 307.1,324.1 326.2,330.9 345.3,335.5 368,336.5 400,337 431,336.5 479,336 538,336 541,327.4 541.7,320 545.9,289 550.7,260 560,215.5 574.7,179.8 582,179.8 583.3,181 590.7,181 605.4,206.2 620.8,237 634.2,266.2 649.5,288 664.8,300 676.8,303.9 685.5,303.9 696.4,302.2 707.3,297.9 720,294 730,290.4 740,288.7 748.5,286.7 762.8,285 800,285 822,285.7 830,287 852,288 905,288" fill="none" stroke="#000" stroke-width="2" shape-rendering="crispEdges" stroke-linejoin="round"/>
<rect x="875" y="196" width="31" height="1" fill="#00f" shape-rendering="crispEdges"/>
</g>
<circle cx="163.5" cy="58" r="8" fill="#000"/><text x="163.5" y="62.5" font-size="12" fill="#fff" text-anchor="middle" font-family="Liberation Sans" filter="url(#th)">1</text>
<rect x="290.5" y="49.5" width="89" height="18" fill="#fff" stroke="#000" shape-rendering="crispEdges"/>
<circle cx="298.5" cy="58" r="8" fill="#008000"/><text x="297.5" y="62.5" font-size="12" fill="#fff" text-anchor="middle" font-family="Liberation Sans" filter="url(#th)">3</text>
<text x="313.5" y="63" font-size="12" fill="#000" font-family="Liberation Sans" filter="url(#th)">han10(v(7))</text>
<circle cx="913.5" cy="197.5" r="8" fill="#008000"/><path d="M908.5 190.5A8 8 0 0 1 921 199" fill="none" stroke="#00f" stroke-width="1.2"/><text x="913" y="201.5" font-size="12" fill="#fff" text-anchor="middle" font-family="Liberation Sans" filter="url(#th)">3</text>
<circle cx="913.75" cy="288" r="7.75" fill="#c0c0c0" stroke="#000" stroke-width="1"/><text x="913.75" y="292.5" font-size="12" fill="#000" text-anchor="middle" font-family="Liberation Sans" filter="url(#th)">1</text>
<line x1="165" y1="311" x2="390" y2="296" stroke="#000" stroke-width="1" shape-rendering="crispEdges"/>
<polygon points="160.5,311.5 175.5,307 175.5,314" fill="#000" shape-rendering="crispEdges"/>
<rect x="732" y="205" width="1" height="84" fill="#000" shape-rendering="crispEdges"/><rect x="728" y="206" width="9" height="3" fill="#000" shape-rendering="crispEdges"/>
</svg>
<div class="t n" style="right:881px;top:142px;letter-spacing:0">-4.692M</div>
<div class="t n" style="right:830px;top:142px;letter-spacing:0">1.60</div>
<div class="t n" style="right:881px;top:212px;letter-spacing:0">-4.696M</div>
<div class="t n" style="right:830px;top:212px;letter-spacing:0">1.40</div>
<div class="t n" style="right:881px;top:282px;letter-spacing:0">-4.700M</div>
<div class="t n" style="right:830px;top:282px;letter-spacing:0">1.20</div>
<div class="t n" style="right:881px;top:352px;letter-spacing:0">-4.704M</div>
<div class="t n" style="right:830px;top:352px;letter-spacing:0">1.00</div>
<div class="t n" style="right:881px;top:422px;letter-spacing:0">-4.708M</div>
<div class="t n" style="right:830px;top:422px;letter-spacing:0">800M</div>
<div class="t n" style="left:180px;width:100px;text-align:center;top:468px;letter-spacing:0">10.0N</div>
<div class="t n" style="left:330px;width:100px;text-align:center;top:468px;letter-spacing:0">30.0N</div>
<div class="t n" style="left:480px;width:100px;text-align:center;top:468px;letter-spacing:0">50.0N</div>
<div class="t n" style="left:479px;width:100px;text-align:center;top:483px;letter-spacing:0.3px">time in secs</div>
<div class="a" style="left:24px;top:258px;width:15px;height:60px;border:1px solid #000"></div>
<div class="t n" style="left:31.5px;top:288px;transform:translate(-50%,-50%) rotate(-90deg);transform-origin:50% 50%;letter-spacing:0;filter:url(#th)">Plot1</div>
<div class="t n" style="left:49px;top:288px;transform:translate(-50%,-50%) rotate(-90deg);transform-origin:50% 50%;letter-spacing:0;filter:url(#th)">i(r2) in amps</div>
<div class="t n" style="left:113px;top:288px;transform:translate(-50%,-50%) rotate(-90deg);transform-origin:50% 50%;letter-spacing:0.15px;filter:url(#th)"><span style="color:#00f">V(7)</span>, <span style="color:#008000">han10(v(7))</span> in volts</div>
<div class="a" style="left:390px;top:264px;width:141px;height:56px;background:#fff;border:1px solid #000"></div>
<div class="t n" style="left:395px;top:273px;font-size:11px;letter-spacing:0">y (mean) = -4.70M amps</div>
<div class="t n" style="left:395px;top:287px;font-size:11px;letter-spacing:0">x (first) =   751P secs</div>
<div class="t n" style="left:395px;top:300px;font-size:11px;letter-spacing:0">between 0 and 100N secs</div>
<div class="a" style="left:641px;top:163px;width:183px;height:44px;background:#fff;border:1px solid #000"></div>
<div class="t n" style="left:646px;top:173px;letter-spacing:-0.1px">y (pk-pk) = 575M volts</div>
<div class="t n" style="left:646px;top:188px;letter-spacing:0.18px">between 25.2N and 100N secs</div>
<div class="sunk" style="left:14px;top:510px;width:198px;height:19px;background:#fff;"></div>
<div class="btn" style="left:14px;top:533px;width:48px;height:18px;"></div>
<div class="t tc" style="left:-62.0px;width:200px;text-align:center;top:536px;">Help</div>
<div class="t" style="left:70px;top:536px;">Cursors  0  and  1</div>
<div class="btn" style="left:164px;top:533px;width:48px;height:18px;"></div>
<div class="t tc" style="left:88.0px;width:200px;text-align:center;top:536px;">Select</div>
<div class="a dither" style="left:219px;top:512px;width:39px;height:18px;box-shadow:inset 1px 1px #000,inset -1px -1px #fff,inset 2px 2px #808080,inset -2px -2px #dfdfdf"></div>
<div class="t tc" style="left:138.5px;width:200px;text-align:center;top:515px;">Cur. 0</div>
<div class="btn" style="left:260px;top:512px;width:39px;height:18px;"></div>
<div class="t tc" style="left:179.5px;width:200px;text-align:center;top:515px;color:#808080;text-shadow:1px 1px #fff">0 to X</div>
<div class="btn" style="left:300px;top:512px;width:39px;height:18px;"></div>
<div class="t tc" style="left:219.5px;width:200px;text-align:center;top:515px;">Y &lt;- 0</div>
<div class="btn" style="left:341px;top:512px;width:39px;height:18px;"></div>
<div class="t tc" style="left:260.5px;width:200px;text-align:center;top:515px;">0 -&gt; Y</div>
<div class="btn" style="left:381px;top:512px;width:39px;height:18px;"></div>
<div class="t tc" style="left:300.5px;width:200px;text-align:center;top:515px;">Home</div>
<div class="t" style="left:425px;top:515px;">X:</div>
<div class="sunk" style="left:438px;top:510px;width:84px;height:19px;background:#fff;"></div>
<div class="t tr" style="right:463px;top:515px;">0</div>
<div class="t" style="left:527px;top:515px;">Y:</div>
<div class="sunk" style="left:539px;top:510px;width:84px;height:19px;background:#c0c0c0;"></div>
<div class="t tr" style="right:363px;top:515px;">1.45732</div>
<div class="t" style="left:630px;top:515px;">delta X</div>
<div class="a dither" style="left:219px;top:533px;width:39px;height:18px;box-shadow:inset 1px 1px #000,inset -1px -1px #fff,inset 2px 2px #808080,inset -2px -2px #dfdfdf"></div>
<div class="t tc" style="left:138.5px;width:200px;text-align:center;top:536px;">Cur. 1</div>
<div class="btn" style="left:260px;top:533px;width:39px;height:18px;"></div>
<div class="t tc" style="left:179.5px;width:200px;text-align:center;top:536px;color:#808080;text-shadow:1px 1px #fff">1 to X</div>
<div class="btn" style="left:300px;top:533px;width:39px;height:18px;"></div>
<div class="t tc" style="left:219.5px;width:200px;text-align:center;top:536px;">Y &lt;- 1</div>
<div class="btn" style="left:341px;top:533px;width:39px;height:18px;"></div>
<div class="t tc" style="left:260.5px;width:200px;text-align:center;top:536px;">1 -&gt; Y</div>
<div class="btn" style="left:381px;top:533px;width:39px;height:18px;"></div>
<div class="t tc" style="left:300.5px;width:200px;text-align:center;top:536px;">Home</div>
<div class="t" style="left:425px;top:536px;">X:</div>
<div class="sunk" style="left:438px;top:531px;width:84px;height:19px;background:#fff;"></div>
<div class="t tr" style="right:463px;top:536px;">100.000N</div>
<div class="t" style="left:527px;top:536px;">Y:</div>
<div class="sunk" style="left:539px;top:531px;width:84px;height:19px;background:#c0c0c0;"></div>
<div class="t tr" style="right:363px;top:536px;">1.45732</div>
<div class="t" style="left:630px;top:536px;">delta Y</div>
<div class="a" style="left:5px;top:554px;width:952px;height:1px;background:#808080"></div>
<div class="a" style="left:5px;top:555px;width:952px;height:1px;background:#fff"></div>
<div class="a" style="left:8px;top:559px;width:467px;height:15px;background:#c0c0c0;box-shadow:inset 1px 1px #808080,inset -1px -1px #fff"></div>
<div class="t" style="left:10px;top:561px;">Output Record</div>
<div class="btn" style="left:448px;top:559px;width:12px;height:13px;"></div>
<svg class="a" style="left:451px;top:562px" width="5" height="8" shape-rendering="crispEdges"><rect x="0" y="0" width="1" height="1" fill="#000"/><rect x="0" y="1" width="2" height="1" fill="#000"/><rect x="0" y="2" width="3" height="1" fill="#000"/><rect x="0" y="3" width="4" height="1" fill="#000"/><rect x="0" y="4" width="3" height="1" fill="#000"/><rect x="0" y="5" width="2" height="1" fill="#000"/><rect x="0" y="6" width="1" height="1" fill="#000"/></svg>
<div class="btn" style="left:462px;top:559px;width:12px;height:13px;"></div>
<svg class="a" style="left:465px;top:563px" width="7" height="6" shape-rendering="crispEdges"><rect x="0" y="0" width="2" height="1" fill="#000"/><rect x="4" y="0" width="2" height="1" fill="#000"/><rect x="1" y="1" width="4" height="1" fill="#000"/><rect x="2" y="2" width="2" height="1" fill="#000"/><rect x="1" y="3" width="4" height="1" fill="#000"/><rect x="0" y="4" width="2" height="1" fill="#000"/><rect x="4" y="4" width="2" height="1" fill="#000"/></svg>
<div class="a" style="left:8px;top:574px;width:466px;height:128px;background:#fff;box-shadow:inset 1px 1px #c0c0c0,inset 2px 2px #000,inset -2px -2px #fff"></div>
<div class="a dither" style="left:456px;top:576px;width:16px;height:108px"></div>
<div class="btn" style="left:456px;top:576px;width:16px;height:16px;"></div>
<div class="btn" style="left:456px;top:668px;width:16px;height:16px;"></div>
<svg class="a" style="left:460px;top:582px" width="8" height="5" shape-rendering="crispEdges"><rect x="4" y="1" width="1" height="1" fill="#fff"/><rect x="3" y="2" width="3" height="1" fill="#fff"/><rect x="2" y="3" width="5" height="1" fill="#fff"/><rect x="1" y="4" width="7" height="1" fill="#fff"/><rect x="3" y="0" width="1" height="1" fill="#808080"/><rect x="2" y="1" width="3" height="1" fill="#808080"/><rect x="1" y="2" width="5" height="1" fill="#808080"/><rect x="0" y="3" width="7" height="1" fill="#808080"/></svg>
<svg class="a" style="left:460px;top:674px" width="8" height="5" shape-rendering="crispEdges"><rect x="1" y="1" width="7" height="1" fill="#fff"/><rect x="2" y="2" width="5" height="1" fill="#fff"/><rect x="3" y="3" width="3" height="1" fill="#fff"/><rect x="4" y="4" width="1" height="1" fill="#fff"/><rect x="0" y="0" width="7" height="1" fill="#808080"/><rect x="1" y="1" width="5" height="1" fill="#808080"/><rect x="2" y="2" width="3" height="1" fill="#808080"/><rect x="3" y="3" width="1" height="1" fill="#808080"/></svg>
<div class="a dither" style="left:10px;top:684px;width:446px;height:16px"></div>
<div class="btn" style="left:10px;top:684px;width:16px;height:16px;"></div>
<div class="btn" style="left:440px;top:684px;width:16px;height:16px;"></div>
<svg class="a" style="left:15px;top:688px" width="5" height="8" shape-rendering="crispEdges"><rect x="4" y="1" width="1" height="1" fill="#fff"/><rect x="3" y="2" width="2" height="1" fill="#fff"/><rect x="2" y="3" width="3" height="1" fill="#fff"/><rect x="1" y="4" width="4" height="1" fill="#fff"/><rect x="2" y="5" width="3" height="1" fill="#fff"/><rect x="3" y="6" width="2" height="1" fill="#fff"/><rect x="4" y="7" width="1" height="1" fill="#fff"/><rect x="3" y="0" width="1" height="1" fill="#808080"/><rect x="2" y="1" width="2" height="1" fill="#808080"/><rect x="1" y="2" width="3" height="1" fill="#808080"/><rect x="0" y="3" width="4" height="1" fill="#808080"/><rect x="1" y="4" width="3" height="1" fill="#808080"/><rect x="2" y="5" width="2" height="1" fill="#808080"/><rect x="3" y="6" width="1" height="1" fill="#808080"/></svg>
<svg class="a" style="left:446px;top:688px" width="5" height="8" shape-rendering="crispEdges"><rect x="1" y="1" width="1" height="1" fill="#fff"/><rect x="1" y="2" width="2" height="1" fill="#fff"/><rect x="1" y="3" width="3" height="1" fill="#fff"/><rect x="1" y="4" width="4" height="1" fill="#fff"/><rect x="1" y="5" width="3" height="1" fill="#fff"/><rect x="1" y="6" width="2" height="1" fill="#fff"/><rect x="1" y="7" width="1" height="1" fill="#fff"/><rect x="0" y="0" width="1" height="1" fill="#808080"/><rect x="0" y="1" width="2" height="1" fill="#808080"/><rect x="0" y="2" width="3" height="1" fill="#808080"/><rect x="0" y="3" width="4" height="1" fill="#808080"/><rect x="0" y="4" width="3" height="1" fill="#808080"/><rect x="0" y="5" width="2" height="1" fill="#808080"/><rect x="0" y="6" width="1" height="1" fill="#808080"/></svg>
<div class="a" style="left:456px;top:684px;width:16px;height:16px;background:#c0c0c0"></div>
<div class="a" style="left:478px;top:557px;width:1px;height:148px;background:#808080"></div>
<div class="a" style="left:479px;top:557px;width:1px;height:148px;background:#dfdfdf"></div>
<div class="a" style="left:482px;top:559px;width:475px;height:15px;background:#c0c0c0;box-shadow:inset 1px 1px #808080,inset -1px -1px #fff"></div>
<div class="t" style="left:484px;top:561px;transform:scaleX(.84)">Commands</div>
<div class="a" style="left:482px;top:574px;width:475px;height:128px;background:#fff;box-shadow:inset 1px 1px #c0c0c0,inset 2px 2px #000,inset -2px -2px #fff"></div>
<div class="a dither" style="left:484px;top:684px;width:470px;height:16px"></div>
<div class="btn" style="left:484px;top:684px;width:16px;height:16px;"></div>
<svg class="a" style="left:489px;top:688px" width="5" height="8" shape-rendering="crispEdges"><rect x="4" y="1" width="1" height="1" fill="#fff"/><rect x="3" y="2" width="2" height="1" fill="#fff"/><rect x="2" y="3" width="3" height="1" fill="#fff"/><rect x="1" y="4" width="4" height="1" fill="#fff"/><rect x="2" y="5" width="3" height="1" fill="#fff"/><rect x="3" y="6" width="2" height="1" fill="#fff"/><rect x="4" y="7" width="1" height="1" fill="#fff"/><rect x="3" y="0" width="1" height="1" fill="#808080"/><rect x="2" y="1" width="2" height="1" fill="#808080"/><rect x="1" y="2" width="3" height="1" fill="#808080"/><rect x="0" y="3" width="4" height="1" fill="#808080"/><rect x="1" y="4" width="3" height="1" fill="#808080"/><rect x="2" y="5" width="2" height="1" fill="#808080"/><rect x="3" y="6" width="1" height="1" fill="#808080"/></svg>
<div class="a" style="left:5px;top:705px;width:952px;height:1px;background:#808080"></div>
<div class="a" style="left:5px;top:706px;width:952px;height:1px;background:#fff"></div>
<div class="t" style="left:657px;top:711px;">Accumulator:</div>
<div class="a" style="left:733px;top:709px;width:206px;height:16px;box-shadow:inset 1px 1px #808080,inset -1px -1px #fff"></div>
<svg class="a" style="left:944px;top:712px" width="12" height="12" shape-rendering="crispEdges"><rect x="11" y="0" width="1" height="1" fill="#fff"/><rect x="10" y="1" width="1" height="1" fill="#fff"/><rect x="11" y="1" width="1" height="1" fill="#808080"/><rect x="9" y="2" width="1" height="1" fill="#fff"/><rect x="10" y="2" width="1" height="1" fill="#808080"/><rect x="11" y="2" width="1" height="1" fill="#808080"/><rect x="8" y="3" width="1" height="1" fill="#fff"/><rect x="9" y="3" width="1" height="1" fill="#808080"/><rect x="10" y="3" width="1" height="1" fill="#808080"/><rect x="7" y="4" width="1" height="1" fill="#fff"/><rect x="8" y="4" width="1" height="1" fill="#808080"/><rect x="9" y="4" width="1" height="1" fill="#808080"/><rect x="6" y="5" width="1" height="1" fill="#fff"/><rect x="7" y="5" width="1" height="1" fill="#808080"/><rect x="8" y="5" width="1" height="1" fill="#808080"/><rect x="5" y="6" width="1" height="1" fill="#fff"/><rect x="6" y="6" width="1" height="1" fill="#808080"/><rect x="7" y="6" width="1" height="1" fill="#808080"/><rect x="4" y="7" width="1" height="1" fill="#fff"/><rect x="5" y="7" width="1" height="1" fill="#808080"/><rect x="6" y="7" width="1" height="1" fill="#808080"/><rect x="3" y="8" width="1" height="1" fill="#fff"/><rect x="4" y="8" width="1" height="1" fill="#808080"/><rect x="5" y="8" width="1" height="1" fill="#808080"/><rect x="2" y="9" width="1" height="1" fill="#fff"/><rect x="3" y="9" width="1" height="1" fill="#808080"/><rect x="4" y="9" width="1" height="1" fill="#808080"/><rect x="1" y="10" width="1" height="1" fill="#fff"/><rect x="2" y="10" width="1" height="1" fill="#808080"/><rect x="3" y="10" width="1" height="1" fill="#808080"/><rect x="0" y="11" width="1" height="1" fill="#fff"/><rect x="1" y="11" width="1" height="1" fill="#808080"/><rect x="2" y="11" width="1" height="1" fill="#808080"/><rect x="11" y="4" width="1" height="1" fill="#fff"/><rect x="10" y="5" width="1" height="1" fill="#fff"/><rect x="11" y="5" width="1" height="1" fill="#808080"/><rect x="9" y="6" width="1" height="1" fill="#fff"/><rect x="10" y="6" width="1" height="1" fill="#808080"/><rect x="11" y="6" width="1" height="1" fill="#808080"/><rect x="8" y="7" width="1" height="1" fill="#fff"/><rect x="9" y="7" width="1" height="1" fill="#808080"/><rect x="10" y="7" width="1" height="1" fill="#808080"/><rect x="7" y="8" width="1" height="1" fill="#fff"/><rect x="8" y="8" width="1" height="1" fill="#808080"/><rect x="9" y="8" width="1" height="1" fill="#808080"/><rect x="6" y="9" width="1" height="1" fill="#fff"/><rect x="7" y="9" width="1" height="1" fill="#808080"/><rect x="8" y="9" width="1" height="1" fill="#808080"/><rect x="5" y="10" width="1" height="1" fill="#fff"/><rect x="6" y="10" width="1" height="1" fill="#808080"/><rect x="7" y="10" width="1" height="1" fill="#808080"/><rect x="4" y="11" width="1" height="1" fill="#fff"/><rect x="5" y="11" width="1" height="1" fill="#808080"/><rect x="6" y="11" width="1" height="1" fill="#808080"/><rect x="11" y="8" width="1" height="1" fill="#fff"/><rect x="10" y="9" width="1" height="1" fill="#fff"/><rect x="11" y="9" width="1" height="1" fill="#808080"/><rect x="9" y="10" width="1" height="1" fill="#fff"/><rect x="10" y="10" width="1" height="1" fill="#808080"/><rect x="11" y="10" width="1" height="1" fill="#808080"/><rect x="8" y="11" width="1" height="1" fill="#fff"/><rect x="9" y="11" width="1" height="1" fill="#808080"/><rect x="10" y="11" width="1" height="1" fill="#808080"/></svg>
<div class="a" style="left:960px;top:700px;width:1px;height:27px;background:#000"></div>
<div class="a" style="left:661px;top:317px;width:321px;height:384px;background:#c0c0c0;box-shadow:inset -1px -1px #000,inset 1px 1px #dfdfdf,inset -2px -2px #808080,inset 2px 2px #fff"></div>
<div class="a" style="left:664px;top:320px;width:315px;height:18px;background:#808080"></div>
<div class="t" style="left:666px;top:323px;color:#c0c0c0;font-weight:bold;transform:none">Add Waveform</div>
<div class="btn" style="left:961px;top:322px;width:16px;height:14px;"></div>
<svg class="a" style="left:965px;top:325px" width="8" height="7" shape-rendering="crispEdges"><path d="M0 0h2v1h1v1h2v-1h1v-1h2v1h-1v1h-1v1h-1v1h1v1h1v1h1v1h-2v-1h-1v-1h-2v1h-1v1h-2v-1h1v-1h1v-1h1v-1h-1v-1h-1v-1h-1z" fill="#000"/></svg>
<div class="a" style="left:675px;top:350px;width:294px;height:74px;box-shadow:inset 1px 1px #808080,inset -1px -1px #fff,inset 2px 2px #fff,inset -2px -2px #808080"></div>
<div class="a" style="left:682px;top:344px;width:42px;height:12px;background:#c0c0c0"></div>
<div class="t" style="left:684px;top:345px;">Source:</div>
<div class="sunk" style="left:685px;top:363px;width:275px;height:20px;background:#fff;"></div>
<div class="t" style="left:689px;top:369px;">C:\spice8\In\Sample.out</div>
<div class="btn" style="left:942px;top:365px;width:16px;height:16px;"></div>
<svg class="a" style="left:946px;top:370px" width="7" height="4" shape-rendering="crispEdges"><path d="M0 0h7v1h-1v1h-1v1h-1v1h-1v-1h-1v-1h-1v-1h-1z" fill="#000"/></svg>
<div class="btn" style="left:685px;top:393px;width:76px;height:23px;"></div>
<div class="t tc" style="left:622.0px;width:200px;text-align:center;top:399px;"><u>B</u>rowse...</div>
<div class="t" style="left:781px;top:399px;">Type:</div>
<div class="sunk" style="left:814px;top:394px;width:146px;height:20px;background:#fff;"></div>
<div class="t" style="left:818px;top:399px;">TRAN</div>
<div class="btn" style="left:942px;top:396px;width:16px;height:16px;"></div>
<svg class="a" style="left:946px;top:401px" width="7" height="4" shape-rendering="crispEdges"><path d="M0 0h7v1h-1v1h-1v1h-1v1h-1v-1h-1v-1h-1v-1h-1z" fill="#000"/></svg>
<div class="t" style="left:675px;top:448px;">Y Axis:</div>
<div class="sunk" style="left:675px;top:466px;width:156px;height:124px;background:#fff;"></div>
<div class="t" style="left:679px;top:468px;">I(VM1)</div>
<div class="t" style="left:679px;top:481px;">V(1)</div>
<div class="t" style="left:679px;top:494px;">V(5)</div>
<div class="a" style="left:677px;top:507px;width:152px;height:14px;background:#000080"></div>
<div class="t" style="left:679px;top:507px;color:#fff">V(7)</div>
<div class="t" style="left:679px;top:520px;">V(8,7)</div>
<div class="a" style="left:843px;top:436px;width:126px;height:106px;box-shadow:inset 1px 1px #808080,inset -1px -1px #fff,inset 2px 2px #fff,inset -2px -2px #808080"></div>
<div class="a" style="left:850px;top:430px;width:36px;height:12px;background:#c0c0c0"></div>
<div class="t" style="left:852px;top:431px;">Show:</div>
<div class="sunk" style="left:855px;top:449px;width:13px;height:13px;background:#fff;"></div>
<svg class="a" style="left:858px;top:452px" width="7" height="7" shape-rendering="crispEdges"><rect x="6" y="0" width="1" height="1"/><rect x="5" y="1" width="1" height="1"/><rect x="6" y="1" width="1" height="1"/><rect x="0" y="2" width="1" height="1"/><rect x="4" y="2" width="1" height="1"/><rect x="5" y="2" width="1" height="1"/><rect x="6" y="2" width="1" height="1"/><rect x="0" y="3" width="1" height="1"/><rect x="1" y="3" width="1" height="1"/><rect x="3" y="3" width="1" height="1"/><rect x="4" y="3" width="1" height="1"/><rect x="5" y="3" width="1" height="1"/><rect x="0" y="4" width="1" height="1"/><rect x="1" y="4" width="1" height="1"/><rect x="2" y="4" width="1" height="1"/><rect x="3" y="4" width="1" height="1"/><rect x="4" y="4" width="1" height="1"/><rect x="1" y="5" width="1" height="1"/><rect x="2" y="5" width="1" height="1"/><rect x="3" y="5" width="1" height="1"/><rect x="2" y="6" width="1" height="1"/></svg>
<div class="t" style="left:873px;top:450px;">Voltages</div>
<div class="sunk" style="left:855px;top:467px;width:13px;height:13px;background:#fff;"></div>
<svg class="a" style="left:858px;top:470px" width="7" height="7" shape-rendering="crispEdges"><rect x="6" y="0" width="1" height="1"/><rect x="5" y="1" width="1" height="1"/><rect x="6" y="1" width="1" height="1"/><rect x="0" y="2" width="1" height="1"/><rect x="4" y="2" width="1" height="1"/><rect x="5" y="2" width="1" height="1"/><rect x="6" y="2" width="1" height="1"/><rect x="0" y="3" width="1" height="1"/><rect x="1" y="3" width="1" height="1"/><rect x="3" y="3" width="1" height="1"/><rect x="4" y="3" width="1" height="1"/><rect x="5" y="3" width="1" height="1"/><rect x="0" y="4" width="1" height="1"/><rect x="1" y="4" width="1" height="1"/><rect x="2" y="4" width="1" height="1"/><rect x="3" y="4" width="1" height="1"/><rect x="4" y="4" width="1" height="1"/><rect x="1" y="5" width="1" height="1"/><rect x="2" y="5" width="1" height="1"/><rect x="3" y="5" width="1" height="1"/><rect x="2" y="6" width="1" height="1"/></svg>
<div class="t" style="left:873px;top:468px;">Currents</div>
<div class="sunk" style="left:855px;top:485px;width:13px;height:13px;background:#fff;"></div>
<div class="t" style="left:873px;top:486px;">Powers</div>
<div class="sunk" style="left:855px;top:503px;width:13px;height:13px;background:#fff;"></div>
<div class="t" style="left:873px;top:504px;">Subcircuits</div>
<div class="sunk" style="left:855px;top:521px;width:13px;height:13px;background:#fff;"></div>
<svg class="a" style="left:858px;top:524px" width="7" height="7" shape-rendering="crispEdges"><rect x="6" y="0" width="1" height="1"/><rect x="5" y="1" width="1" height="1"/><rect x="6" y="1" width="1" height="1"/><rect x="0" y="2" width="1" height="1"/><rect x="4" y="2" width="1" height="1"/><rect x="5" y="2" width="1" height="1"/><rect x="6" y="2" width="1" height="1"/><rect x="0" y="3" width="1" height="1"/><rect x="1" y="3" width="1" height="1"/><rect x="3" y="3" width="1" height="1"/><rect x="4" y="3" width="1" height="1"/><rect x="5" y="3" width="1" height="1"/><rect x="0" y="4" width="1" height="1"/><rect x="1" y="4" width="1" height="1"/><rect x="2" y="4" width="1" height="1"/><rect x="3" y="4" width="1" height="1"/><rect x="4" y="4" width="1" height="1"/><rect x="1" y="5" width="1" height="1"/><rect x="2" y="5" width="1" height="1"/><rect x="3" y="5" width="1" height="1"/><rect x="2" y="6" width="1" height="1"/></svg>
<div class="t" style="left:873px;top:522px;">Other</div>
<div class="a" style="left:843px;top:550px;width:126px;height:72px;box-shadow:inset 1px 1px #808080,inset -1px -1px #fff,inset 2px 2px #fff,inset -2px -2px #808080"></div>
<div class="a" style="left:850px;top:544px;width:62px;height:12px;background:#c0c0c0"></div>
<div class="t" style="left:852px;top:545px;">Auto Scale:</div>
<svg class="a" style="left:856px;top:561px" width="12" height="12" shape-rendering="crispEdges"><path d="M4 0h4v1h2v1h1v2h1v4h-1v2h-1v1h-2v1h-4v-1h-2v-1h-1v-2h-1v-4h1v-2h1v-1h2z" fill="#fff"/><path d="M4 0h4v1h2v1h-2v-1h-4v1h-2v2h-1v4h1v2h-1v-2h-1v-4h1v-2h1v-1h2z" fill="#808080"/><path d="M4 1h4v1h2v1h-2v-1h-4v1h-1v1h-1v4h1v1h-1v-1h-1v-4h1v-2h1v-1h2z" fill="#000"/><path d="M4 2h4v1h1v1h1v4h-1v1h-1v1h-4v-1h-1v-1h-1v-4h1v-1h1z" fill="#fff"/><path d="M10 2h1v2h-1zM10 8h1v2h-1v1h-2v-1h2zM4 10h4v1h-4z" fill="#dfdfdf"/></svg>
<div class="t" style="left:873px;top:562px;">New Trace Only</div>
<svg class="a" style="left:856px;top:581px" width="12" height="12" shape-rendering="crispEdges"><path d="M4 0h4v1h2v1h1v2h1v4h-1v2h-1v1h-2v1h-4v-1h-2v-1h-1v-2h-1v-4h1v-2h1v-1h2z" fill="#fff"/><path d="M4 0h4v1h2v1h-2v-1h-4v1h-2v2h-1v4h1v2h-1v-2h-1v-4h1v-2h1v-1h2z" fill="#808080"/><path d="M4 1h4v1h2v1h-2v-1h-4v1h-1v1h-1v4h1v1h-1v-1h-1v-4h1v-2h1v-1h2z" fill="#000"/><path d="M4 2h4v1h1v1h1v4h-1v1h-1v1h-4v-1h-1v-1h-1v-4h1v-1h1z" fill="#fff"/><path d="M10 2h1v2h-1zM10 8h1v2h-1v1h-2v-1h2zM4 10h4v1h-4z" fill="#dfdfdf"/><path d="M5 4h2v1h1v2h-1v1h-2v-1h-1v-2h1z" fill="#000"/></svg>
<div class="t" style="left:873px;top:582px;">With Like Traces</div>
<svg class="a" style="left:856px;top:600px" width="12" height="12" shape-rendering="crispEdges"><path d="M4 0h4v1h2v1h1v2h1v4h-1v2h-1v1h-2v1h-4v-1h-2v-1h-1v-2h-1v-4h1v-2h1v-1h2z" fill="#fff"/><path d="M4 0h4v1h2v1h-2v-1h-4v1h-2v2h-1v4h1v2h-1v-2h-1v-4h1v-2h1v-1h2z" fill="#808080"/><path d="M4 1h4v1h2v1h-2v-1h-4v1h-1v1h-1v4h1v1h-1v-1h-1v-4h1v-2h1v-1h2z" fill="#000"/><path d="M4 2h4v1h1v1h1v4h-1v1h-1v1h-4v-1h-1v-1h-1v-4h1v-1h1z" fill="#fff"/><path d="M10 2h1v2h-1zM10 8h1v2h-1v1h-2v-1h2zM4 10h4v1h-4z" fill="#dfdfdf"/></svg>
<div class="t" style="left:873px;top:601px;">Scale and Tile</div>
<div class="sunk" style="left:855px;top:634px;width:13px;height:13px;background:#fff;"></div>
<div class="t" style="left:873px;top:635px;">Make New Plot</div>
<div class="t" style="left:675px;top:609px;">X Axis:</div>
<div class="sunk" style="left:675px;top:628px;width:156px;height:21px;background:#fff;"></div>
<div class="t" style="left:679px;top:633px;">default</div>
<div class="btn" style="left:813px;top:630px;width:16px;height:17px;"></div>
<svg class="a" style="left:817px;top:636px" width="7" height="4" shape-rendering="crispEdges"><path d="M0 0h7v1h-1v1h-1v1h-1v1h-1v-1h-1v-1h-1v-1h-1z" fill="#000"/></svg>
<div class="btn" style="left:675px;top:664px;width:68px;height:23px;"></div>
<div class="t tc" style="left:609.0px;width:200px;text-align:center;top:669px;"><u>A</u>dd</div>
<div class="btn" style="left:750px;top:664px;width:68px;height:23px;"></div>
<div class="t tc" style="left:684.0px;width:200px;text-align:center;top:669px;color:#808080;text-shadow:1px 1px #fff">All Test <u>P</u>ts.</div>
<div class="btn" style="left:825px;top:664px;width:68px;height:23px;"></div>
<div class="t tc" style="left:759.0px;width:200px;text-align:center;top:669px;"><u>D</u>one</div>
<div class="btn" style="left:900px;top:664px;width:68px;height:23px;"></div>
<div class="t tc" style="left:834.0px;width:200px;text-align:center;top:669px;"><u>H</u>elp</div>
<div class="pop" style="left:178px;top:41px;width:115px;height:202px"></div>
<div class="t" style="left:195px;top:46px;"><u>C</u>ursors</div>
<svg class="a" style="left:280px;top:48px" width="5" height="8" shape-rendering="crispEdges"><rect x="0" y="0" width="1" height="1" fill="#000"/><rect x="0" y="1" width="2" height="1" fill="#000"/><rect x="0" y="2" width="3" height="1" fill="#000"/><rect x="0" y="3" width="4" height="1" fill="#000"/><rect x="0" y="4" width="3" height="1" fill="#000"/><rect x="0" y="5" width="2" height="1" fill="#000"/><rect x="0" y="6" width="1" height="1" fill="#000"/></svg>
<div class="t" style="left:195px;top:63px;"><u>L</u>abels</div>
<svg class="a" style="left:280px;top:65px" width="5" height="8" shape-rendering="crispEdges"><rect x="0" y="0" width="1" height="1" fill="#000"/><rect x="0" y="1" width="2" height="1" fill="#000"/><rect x="0" y="2" width="3" height="1" fill="#000"/><rect x="0" y="3" width="4" height="1" fill="#000"/><rect x="0" y="4" width="3" height="1" fill="#000"/><rect x="0" y="5" width="2" height="1" fill="#000"/><rect x="0" y="6" width="1" height="1" fill="#000"/></svg>
<div class="t" style="left:195px;top:80px;">Lin<u>k</u>ing</div>
<svg class="a" style="left:280px;top:82px" width="5" height="8" shape-rendering="crispEdges"><rect x="0" y="0" width="1" height="1" fill="#000"/><rect x="0" y="1" width="2" height="1" fill="#000"/><rect x="0" y="2" width="3" height="1" fill="#000"/><rect x="0" y="3" width="4" height="1" fill="#000"/><rect x="0" y="4" width="3" height="1" fill="#000"/><rect x="0" y="5" width="2" height="1" fill="#000"/><rect x="0" y="6" width="1" height="1" fill="#000"/></svg>
<div class="a" style="left:181px;top:98px;width:109px;height:1px;background:#808080"></div>
<div class="a" style="left:181px;top:99px;width:109px;height:1px;background:#fff"></div>
<div class="a" style="left:181px;top:104px;width:108px;height:17px;background:#000080"></div>
<div class="t" style="left:195px;top:106px;color:#fff">Build</div>
<svg class="a" style="left:280px;top:108px" width="5" height="8" shape-rendering="crispEdges"><rect x="0" y="0" width="1" height="1" fill="#fff"/><rect x="0" y="1" width="2" height="1" fill="#fff"/><rect x="0" y="2" width="3" height="1" fill="#fff"/><rect x="0" y="3" width="4" height="1" fill="#fff"/><rect x="0" y="4" width="3" height="1" fill="#fff"/><rect x="0" y="5" width="2" height="1" fill="#fff"/><rect x="0" y="6" width="1" height="1" fill="#fff"/></svg>
<div class="t" style="left:195px;top:123px;">Calculus</div>
<svg class="a" style="left:280px;top:125px" width="5" height="8" shape-rendering="crispEdges"><rect x="0" y="0" width="1" height="1" fill="#000"/><rect x="0" y="1" width="2" height="1" fill="#000"/><rect x="0" y="2" width="3" height="1" fill="#000"/><rect x="0" y="3" width="4" height="1" fill="#000"/><rect x="0" y="4" width="3" height="1" fill="#000"/><rect x="0" y="5" width="2" height="1" fill="#000"/><rect x="0" y="6" width="1" height="1" fill="#000"/></svg>
<div class="t" style="left:195px;top:140px;">Complex</div>
<svg class="a" style="left:280px;top:142px" width="5" height="8" shape-rendering="crispEdges"><rect x="0" y="0" width="1" height="1" fill="#000"/><rect x="0" y="1" width="2" height="1" fill="#000"/><rect x="0" y="2" width="3" height="1" fill="#000"/><rect x="0" y="3" width="4" height="1" fill="#000"/><rect x="0" y="4" width="3" height="1" fill="#000"/><rect x="0" y="5" width="2" height="1" fill="#000"/><rect x="0" y="6" width="1" height="1" fill="#000"/></svg>
<div class="t" style="left:195px;top:157px;">Control Systems</div>
<svg class="a" style="left:280px;top:159px" width="5" height="8" shape-rendering="crispEdges"><rect x="0" y="0" width="1" height="1" fill="#000"/><rect x="0" y="1" width="2" height="1" fill="#000"/><rect x="0" y="2" width="3" height="1" fill="#000"/><rect x="0" y="3" width="4" height="1" fill="#000"/><rect x="0" y="4" width="3" height="1" fill="#000"/><rect x="0" y="5" width="2" height="1" fill="#000"/><rect x="0" y="6" width="1" height="1" fill="#000"/></svg>
<div class="t" style="left:195px;top:174px;">Functions</div>
<svg class="a" style="left:280px;top:176px" width="5" height="8" shape-rendering="crispEdges"><rect x="0" y="0" width="1" height="1" fill="#000"/><rect x="0" y="1" width="2" height="1" fill="#000"/><rect x="0" y="2" width="3" height="1" fill="#000"/><rect x="0" y="3" width="4" height="1" fill="#000"/><rect x="0" y="4" width="3" height="1" fill="#000"/><rect x="0" y="5" width="2" height="1" fill="#000"/><rect x="0" y="6" width="1" height="1" fill="#000"/></svg>
<div class="t" style="left:195px;top:191px;">Measurements</div>
<svg class="a" style="left:280px;top:193px" width="5" height="8" shape-rendering="crispEdges"><rect x="0" y="0" width="1" height="1" fill="#000"/><rect x="0" y="1" width="2" height="1" fill="#000"/><rect x="0" y="2" width="3" height="1" fill="#000"/><rect x="0" y="3" width="4" height="1" fill="#000"/><rect x="0" y="4" width="3" height="1" fill="#000"/><rect x="0" y="5" width="2" height="1" fill="#000"/><rect x="0" y="6" width="1" height="1" fill="#000"/></svg>
<div class="t" style="left:195px;top:208px;">Time Domain</div>
<svg class="a" style="left:280px;top:210px" width="5" height="8" shape-rendering="crispEdges"><rect x="0" y="0" width="1" height="1" fill="#000"/><rect x="0" y="1" width="2" height="1" fill="#000"/><rect x="0" y="2" width="3" height="1" fill="#000"/><rect x="0" y="3" width="4" height="1" fill="#000"/><rect x="0" y="4" width="3" height="1" fill="#000"/><rect x="0" y="5" width="2" height="1" fill="#000"/><rect x="0" y="6" width="1" height="1" fill="#000"/></svg>
<div class="t" style="left:195px;top:225px;">Trig</div>
<svg class="a" style="left:280px;top:227px" width="5" height="8" shape-rendering="crispEdges"><rect x="0" y="0" width="1" height="1" fill="#000"/><rect x="0" y="1" width="2" height="1" fill="#000"/><rect x="0" y="2" width="3" height="1" fill="#000"/><rect x="0" y="3" width="4" height="1" fill="#000"/><rect x="0" y="4" width="3" height="1" fill="#000"/><rect x="0" y="5" width="2" height="1" fill="#000"/><rect x="0" y="6" width="1" height="1" fill="#000"/></svg>
<div class="pop" style="left:287px;top:101px;width:245px;height:159px"></div>
<div class="a" style="left:290px;top:104px;width:239px;height:17px;background:#000080"></div>
<div class="t" style="left:311px;top:106px;color:#fff">Pulse</div>
<svg class="a" style="left:520px;top:108px" width="5" height="8" shape-rendering="crispEdges"><rect x="0" y="0" width="1" height="1" fill="#fff"/><rect x="0" y="1" width="2" height="1" fill="#fff"/><rect x="0" y="2" width="3" height="1" fill="#fff"/><rect x="0" y="3" width="4" height="1" fill="#fff"/><rect x="0" y="4" width="3" height="1" fill="#fff"/><rect x="0" y="5" width="2" height="1" fill="#fff"/><rect x="0" y="6" width="1" height="1" fill="#fff"/></svg>
<div class="t" style="left:311px;top:123px;">Apply han  10% taper to current waveform</div>
<div class="t" style="left:311px;top:140px;">Apply han  20% taper to current waveform</div>
<div class="t" style="left:311px;top:157px;">Apply han 100% taper to current waveform</div>
<div class="t" style="left:311px;top:174px;">Black Body</div>
<div class="t" style="left:311px;top:191px;">Cosine Window</div>
<div class="t" style="left:311px;top:208px;">hanning  10 percent taper</div>
<div class="t" style="left:311px;top:225px;">Hanning  20 percent taper</div>
<div class="t" style="left:311px;top:242px;">Hanning 100 percent taper</div>
<div class="pop" style="left:527px;top:101px;width:103px;height:74px"></div>
<div class="t" style="left:551px;top:106px;">Pulse 10Pct</div>
<div class="t" style="left:551px;top:123px;">Pulse 20Pct</div>
<div class="t" style="left:551px;top:140px;">Pulse 25Pct</div>
<div class="t" style="left:551px;top:157px;">Pulse 50Pct</div>
</body></html>
